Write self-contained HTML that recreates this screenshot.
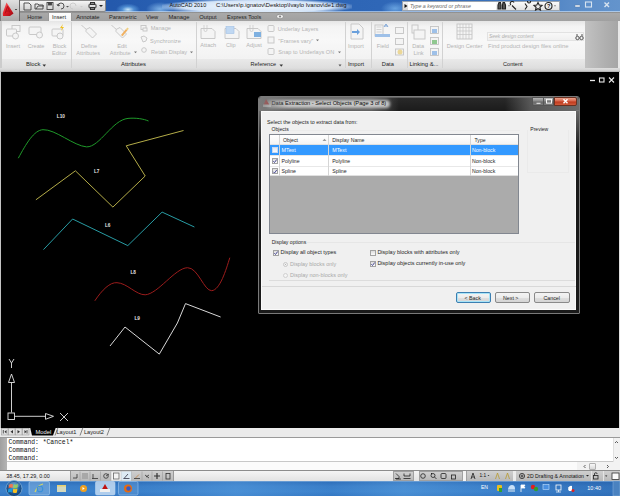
<!DOCTYPE html>
<html><head><meta charset="utf-8">
<style>
*{margin:0;padding:0;box-sizing:border-box}
html,body{width:620px;height:496px;overflow:hidden;background:#000;font-family:"Liberation Sans",sans-serif}
.a{position:absolute}
.t{position:absolute;white-space:nowrap;line-height:1}
.rl{color:#b4b4b4;font-size:5.6px}
.pt{color:#222;font-size:5.8px}
.dt{color:#1e1e1e;font-size:5.4px}
.cb{position:absolute;width:6px;height:6px;border:1px solid #a2a2a2;background:linear-gradient(#dcdcdc,#fafafa)}
.btn{position:absolute;top:292.4px;height:10.3px;border:1px solid #8a8a8a;border-radius:2px;background:linear-gradient(#f4f4f4 0%,#ececec 50%,#e0e0e0 51%,#d4d4d4 100%)}
.sb{position:absolute;top:472px;width:10px;height:8px;border:1px solid #a8a8a8;background:linear-gradient(#f0f0f0,#cfcfcf)}
</style></head><body>
<!-- ===== TITLE BAR ===== -->
<div class="a" style="left:0;top:0;width:620px;height:12px;background:linear-gradient(90deg,#2a62b4 0%,#2459ac 18%,#2a62b4 30%,#2c64b4 50%,#3068b8 65%,#3a72bc 80%,#5a8cc8 92%,#6494cc 100%)"></div>
<div class="a" style="left:106px;top:0;width:40px;height:12px;background:radial-gradient(ellipse 12px 6px at 55% 80%,rgba(210,240,255,.95),rgba(120,190,245,.5) 50%,rgba(60,130,220,0) 100%)"></div>
<div class="a" style="left:140px;top:0;width:40px;height:12px;background:radial-gradient(ellipse 14px 7px at 50% 75%,rgba(160,210,250,.7),rgba(60,130,220,0) 100%)"></div>
<div class="a" style="left:162px;top:0;width:190px;height:12px;background:radial-gradient(ellipse 100px 8px at 50% 55%,rgba(245,250,255,.98) 0%,rgba(230,242,255,.9) 75%,rgba(160,200,240,0) 100%)"></div>
<div class="a" style="left:380px;top:0;width:30px;height:12px;background:radial-gradient(ellipse 14px 7px at 50% 70%,rgba(140,200,250,.6),rgba(60,130,220,0) 100%)"></div>
<div class="a" style="left:20px;top:11px;width:600px;height:1px;background:rgba(220,235,250,.6)"></div>
<div class="t" style="left:169.5px;top:3px;font-size:5.5px;color:#101010">AutoCAD 2010</div>
<div class="t" style="left:216px;top:3px;font-size:5.85px;color:#101010">C:\Users\p.ignatov\Desktop\Ivaylo Ivanov\de1.dwg</div>
<!-- app button -->
<div class="a" style="left:0;top:0;width:20px;height:21px;background:linear-gradient(#e0e0e0,#c4c4c4 50%,#a8a8a8);border-right:1px solid #6a6a6a;border-left:1px solid #7a7a7a"></div>
<svg class="a" style="left:0;top:0" width="20" height="21" viewBox="0 0 20 21">
<defs><linearGradient id="rg" x1="0" y1="0" x2="1" y2="1"><stop offset="0" stop-color="#ff7070"/><stop offset=".5" stop-color="#e01a24"/><stop offset="1" stop-color="#9a0c14"/></linearGradient></defs>
<polygon points="6.5,2.5 13.5,13.5 10,16 3,16 2.8,13" fill="url(#rg)"/>
<path d="M5,13.5 l2.5,-7 l2.5,6 M6,11 h3" stroke="#b01018" stroke-width="1" fill="none"/>
<path d="M14.8,9 h2.4 l-1.2,1.3 z" fill="#222"/>
</svg>
<!-- QAT -->
<div class="a" style="left:20px;top:0;width:86px;height:11.5px;background:linear-gradient(#f6f6f6,#dedede 55%,#cfcfcf);border:1px solid #8a8a8a;border-left:none;border-radius:0 0 2px 0"></div>
<svg class="a" style="left:20px;top:0" width="86" height="12" viewBox="0 0 86 12">
<g fill="none" stroke="#444" stroke-width="0.9">
<path d="M4,3 h5 l2,2 v5 h-7 z"/>
<path d="M15,4 h3 l1,1 h4 v4 h-8 z M16,9 l2,-3 h6"/>
<rect x="27" y="2.5" width="6" height="7"/><rect x="28.5" y="2.5" width="3" height="2.5" fill="#444"/>
<path d="M38,6 a3,3 0 1,1 3,3" /><path d="M37,4 l1,2 l2,-1"/>
</g>
<path d="M46,6 l1.5,1.5 l1.5,-1.5 z" fill="#555"/>
<g fill="none" stroke="#c8c8c8" stroke-width="0.9"><path d="M56,6 a3,3 0 1,0 -3,3"/></g>
<path d="M60,6 l1.5,1.5 l1.5,-1.5 z" fill="#ccc"/>
<g fill="none" stroke="#333" stroke-width="1"><rect x="69" y="4" width="7" height="4" rx="1"/><rect x="70.5" y="2.5" width="4" height="2"/><rect x="70.5" y="7.5" width="4" height="2"/></g>
<path d="M79,5 l2,2 l2,-2 z" fill="#222"/>
</svg>
<!-- search strip -->
<div class="a" style="left:402px;top:1px;width:158px;height:10px;background:linear-gradient(#fbfbfb,#e2e2e2);border:1px solid #9aa4b0"></div>
<div class="a" style="left:403px;top:2px;width:5px;height:8px;background:linear-gradient(#f4f4f4,#d4d4d4)"></div>
<svg class="a" style="left:403px;top:2px" width="6" height="8"><path d="M1.5,2 l3,2 l-3,2 z" fill="#111"/></svg>
<div class="a" style="left:408px;top:2px;width:88px;height:8px;background:#fff"></div>
<div class="t" style="left:410px;top:4.2px;font-size:5.3px;font-style:italic;color:#6a6a6a">Type a keyword or phrase</div>
<svg class="a" style="left:496px;top:1px" width="64" height="10" viewBox="0 0 64 10">
<g fill="none" stroke="#222" stroke-width="1.1">
<path d="M2,8 v-4 l1,-2.5 h1.5 l0.5,2.5 v4 z M6.5,8 v-4 l0.5,-2.5 h1.5 l1,2.5 v4 z" fill="#555"/>
<path d="M20,8.5 l-4,-4 M15,4 a2,2 0 1,1 3,-2.5"/>
<path d="M29,2.5 l2,3 l-2,3 M33,2 a1.5,1.5 0 1,1 0.1,0"/>
<path d="M42,1.5 l1.2,2.6 2.8,.3 -2.1,1.9 .6,2.8 -2.5,-1.4 -2.5,1.4 .6,-2.8 -2.1,-1.9 2.8,-.3 z"/>
<circle cx="52.5" cy="5" r="3.5"/>
</g>
<path d="M12,4.5 l1,1 l1,-1 z M58,4.5 l1,1 l1,-1 z" fill="#333"/>
<text x="51" y="7.2" font-size="5.5" font-family="Liberation Sans" font-weight="bold" fill="#222">?</text>
</svg>
<!-- window buttons -->
<svg class="a" style="left:560px;top:0" width="60" height="12" viewBox="0 0 60 12">
<rect x="15" y="5" width="5" height="2" fill="#e8eef6" stroke="#5a7aa0" stroke-width="0.4"/>
<rect x="25.5" y="2" width="6" height="5" fill="none" stroke="#d8e4f0" stroke-width="1.1"/>
<path d="M44.5,2.5 l4.5,4.5 M49,2.5 l-4.5,4.5" stroke="#d8e4f0" stroke-width="1.4"/>
</svg>
<!-- ===== TAB ROW ===== -->
<div class="a" style="left:20px;top:11.5px;width:600px;height:9.5px;background:linear-gradient(#aaaaaa,#a0a0a0)"></div>
<div class="a" style="left:20px;top:11.5px;width:600px;height:1px;background:#7a7a7a;opacity:.5"></div>
<div class="a" style="left:47.5px;top:11.5px;width:24px;height:10px;background:linear-gradient(#fdfdfd,#f4f4f4);border:1px solid #9a9a9a;border-bottom:none"></div>
<div class="t pt" style="left:27.3px;top:15.2px;font-size:5.6px">Home</div>
<div class="t pt" style="left:52px;top:15.2px;font-size:5.6px">Insert</div>
<div class="t pt" style="left:76.2px;top:15.2px;font-size:5.85px">Annotate</div>
<div class="t pt" style="left:109px;top:15.2px;font-size:5.7px">Parametric</div>
<div class="t pt" style="left:146px;top:15.2px;font-size:5.7px">View</div>
<div class="t pt" style="left:168.5px;top:15.2px;font-size:5.8px">Manage</div>
<div class="t pt" style="left:199.3px;top:15.2px;font-size:5.8px">Output</div>
<div class="t pt" style="left:227px;top:15.2px;font-size:5.5px">Express Tools</div>
<svg class="a" style="left:275px;top:12.5px" width="10" height="7"><ellipse cx="5" cy="3.5" rx="3.5" ry="2.3" fill="#e8e8e8" stroke="#777" stroke-width="0.6"/><circle cx="5" cy="3.5" r="1" fill="#777"/></svg>
<!-- ===== RIBBON ===== -->
<div class="a" style="left:0;top:21px;width:620px;height:51px;background:#d6d6d6"></div>
<div class="a" style="left:0;top:21px;width:1.5px;height:51px;background:#cccccc"></div>
<div class="a" style="left:1.5px;top:21px;width:583.5px;height:38px;background:linear-gradient(#e6e6e6 0%,#f4f4f4 15%,#f8f8f8 50%,#f2f2f2 100%)"></div>
<div class="a" style="left:1.5px;top:59px;width:583.5px;height:9.3px;background:linear-gradient(#e9e9e9,#dedede)"></div>
<div class="a" style="left:585px;top:21px;width:33px;height:47.3px;background:linear-gradient(90deg,#c2c2c2,#b0b0b0 60%,#a6a6a6)"></div>
<div class="a" style="left:618px;top:21px;width:2px;height:51px;background:#e8e8e8"></div>
<div class="a" style="left:0;top:68.3px;width:620px;height:4px;background:linear-gradient(#dedede,#d2d2d2 60%,#a8a8a8)"></div>
<!-- panel separators -->
<div class="a" style="left:71px;top:22px;width:1px;height:46px;background:#d2d2d2"></div>
<div class="a" style="left:195.5px;top:22px;width:1px;height:46px;background:#d2d2d2"></div>
<div class="a" style="left:344.5px;top:22px;width:1px;height:46px;background:#d2d2d2"></div>
<div class="a" style="left:370.5px;top:22px;width:1px;height:46px;background:#d2d2d2"></div>
<div class="a" style="left:406.5px;top:22px;width:1px;height:46px;background:#d2d2d2"></div>
<div class="a" style="left:441.5px;top:22px;width:1px;height:46px;background:#d2d2d2"></div>
<!-- panel titles -->
<div class="t pt" style="left:26px;top:62.2px;font-size:5.9px">Block</div>
<svg class="a" style="left:42px;top:64px" width="5" height="4"><path d="M0.5,0.5 h3.5 l-1.75,2.2 z" fill="#333"/></svg>
<div class="t pt" style="left:121px;top:62.2px;font-size:5.9px">Attributes</div>
<div class="t pt" style="left:250.6px;top:62.2px;font-size:5.5px">Reference</div>
<svg class="a" style="left:279px;top:64px" width="5" height="4"><path d="M0.5,0.5 h3.5 l-1.75,2.2 z" fill="#333"/></svg>
<svg class="a" style="left:338px;top:64px" width="5" height="4"><path d="M0.5,0.5 h3 l-1.5,2 z" fill="#555"/></svg>
<div class="t pt" style="left:348px;top:62.2px;font-size:5.7px">Import</div>
<div class="t pt" style="left:381.8px;top:62.2px;font-size:5.7px">Data</div>
<div class="t pt" style="left:409.5px;top:62.2px;font-size:5.86px">Linking &amp;...</div>
<div class="t pt" style="left:503px;top:62.2px;font-size:5.6px">Content</div>
<!-- ribbon labels -->
<div class="t rl" style="left:6px;top:43.7px">Insert</div>
<div class="t rl" style="left:27.7px;top:43.7px">Create</div>
<div class="t rl" style="left:52.7px;top:43.7px">Block</div>
<div class="t rl" style="left:52px;top:50.8px">Editor</div>
<div class="t rl" style="left:80.9px;top:43.7px">Define</div>
<div class="t rl" style="left:76.3px;top:50.8px">Attributes</div>
<div class="t rl" style="left:117.2px;top:43.7px">Edit</div>
<div class="t rl" style="left:109.8px;top:50.8px">Attribute</div>
<svg class="a" style="left:134px;top:51px" width="4" height="3"><path d="M0,0.5 h3 l-1.5,1.8 z" fill="#777"/></svg>
<div class="t rl" style="left:150.7px;top:26.3px">Manage</div>
<div class="t rl" style="left:150px;top:38.5px">Synchronize</div>
<div class="t rl" style="left:151px;top:49.8px">Retain Display</div>
<svg class="a" style="left:190px;top:50.5px" width="4" height="3"><path d="M0,0.5 h3 l-1.5,1.8 z" fill="#777"/></svg>
<div class="t rl" style="left:200.3px;top:43.0px">Attach</div>
<div class="t rl" style="left:226px;top:43.0px">Clip</div>
<div class="t rl" style="left:246.3px;top:43.0px">Adjust</div>
<div class="t rl" style="left:277.7px;top:27.1px">Underlay Layers</div>
<div class="t rl" style="left:278.3px;top:38.5px">"Frames vary"</div>
<svg class="a" style="left:316px;top:39px" width="4" height="3"><path d="M0,0.5 h3 l-1.5,1.8 z" fill="#777"/></svg>
<div class="t rl" style="left:278.3px;top:49.8px">Snap to Underlays ON</div>
<svg class="a" style="left:338px;top:50.5px" width="4" height="3"><path d="M0,0.5 h3 l-1.5,1.8 z" fill="#777"/></svg>
<div class="t rl" style="left:347.9px;top:43.7px">Import</div>
<div class="t rl" style="left:376.8px;top:43.7px">Field</div>
<div class="t rl" style="left:412.2px;top:43.7px">Data</div>
<div class="t rl" style="left:413.4px;top:50.8px">Link</div>
<div class="t rl" style="left:446.8px;top:43.7px">Design Center</div>
<!-- content search -->
<div class="a" style="left:486.5px;top:32px;width:97px;height:9px;background:linear-gradient(#f8f8f8,#f0f0f0);border:1px solid #e2e2e2"></div>
<div class="t" style="left:489px;top:35.2px;font-size:4.95px;font-style:italic;color:#b0b0b0">Seek design content</div>
<svg class="a" style="left:575px;top:33px" width="9" height="8"><g fill="none" stroke="#555" stroke-width="1"><circle cx="2.5" cy="5" r="1.7"/><circle cx="6.5" cy="5" r="1.7"/><path d="M2,3 v-2 M7,3 v-2"/></g></svg>
<div class="t" style="left:488.1px;top:43.5px;font-size:5.83px;color:#b4b4b4">Find product design files online</div>
<svg class="a" style="left:0;top:0" width="620" height="72" viewBox="0 0 620 72">
<g fill="#f4f4f4" stroke="#c4c4c4" stroke-width="0.9">
<!-- Insert -->
<rect x="12" y="25.5" width="8" height="6"/><rect x="6.5" y="29" width="10" height="7" rx="1"/><circle cx="15.5" cy="36" r="3"/>
<!-- Create -->
<rect x="29" y="27" width="12" height="7.5" rx="1"/><circle cx="39.5" cy="35" r="3"/>
<!-- Block editor -->
<rect x="52" y="29" width="11" height="7" rx="1"/><circle cx="60" cy="36" r="3"/>
<!-- define attr tag -->
<path d="M86,29.5 l4,-2 l6.5,6.5 l-4,4 l-6.5,-6.5 z"/><path d="M86,29 q-3,-2 -4.5,-4" fill="none"/>
<!-- edit attr -->
<path d="M116,29.5 l4,-2 l6.5,6.5 l-4,4 l-6.5,-6.5 z"/><path d="M116,29 q-3,-2 -4.5,-4" fill="none"/>
<!-- small attr icons -->
<rect x="141" y="25.5" width="5" height="4"/><rect x="143" y="28" width="4" height="3"/>
<path d="M141,37 l3,-1 l3,2 l-1,3 l-3,1 z"/>
<circle cx="144" cy="50" r="2.3"/>
<!-- Attach -->
<path d="M201,28.5 h11 l3,3 v7 h-14 z"/>
<!-- Clip -->
<path d="M225,28.5 h11 l3,3 v7 h-14 z"/>
<!-- Adjust -->
<path d="M247,28.5 h11 l3,3 v7 h-14 z"/>
<!-- underlay small -->
<rect x="268" y="25.5" width="6" height="6" rx="1"/>
<rect x="268" y="37" width="6" height="6"/>
<rect x="268" y="48.5" width="6" height="6" rx="1"/>
<!-- import -->
<path d="M351,24 h8 l4,4 v11 h-12 z"/>
<!-- field -->
<rect x="375" y="25" width="8" height="11"/>
<rect x="395.5" y="27.5" width="8" height="6"/><rect x="395.5" y="38.5" width="8" height="6"/><rect x="395.5" y="49" width="8" height="6"/>
<!-- data link -->
<rect x="412" y="25" width="6" height="8"/><rect x="414" y="30" width="11" height="9"/>
<rect x="430.5" y="26.5" width="8" height="7"/><rect x="430.5" y="37.5" width="8" height="7"/><rect x="430.5" y="48.5" width="8" height="7"/>
<!-- design center -->
<rect x="457" y="24" width="15" height="15"/>
</g>
<g fill="none" stroke="#c4c4c4" stroke-width="0.7">
<path d="M460,24 v15 M463,24 v15 M466,24 v15 M469,24 v15 M457,27.5 h15 M457,31 h15 M457,34.5 h15"/>
<path d="M204,25 v5 a1.5,1.5 0 0,0 3,0 v-5"/><path d="M250,25 v5 a1.5,1.5 0 0,0 3,0 v-5"/>
<path d="M376.5,27 h5 M376.5,29.5 h5 M376.5,32 h5"/>
</g>
<path d="M60,28 l3,-4 l-1,3 h2 l-3,4 l1,-3 z" fill="#f0c020"/>
<path d="M121,35 l5,-6 l1.5,1.3 l-5,6 z" fill="#f0b060"/><path d="M126,29 l1.5,-1.5 l1.3,1.3 l-1.3,1.5 z" fill="#f0d080"/>
<rect x="226" y="26.5" width="8" height="7" fill="#c0d8f2" stroke="#a0c0e4" stroke-width="0.6"/>
<rect x="254" y="32" width="7" height="5" fill="#7eb0e0"/>
<path d="M352,31 h5 v-2 l3,3 l-3,3 v-2 h-5 z" fill="#6aa0dc"/>
<path d="M384,27 l2,-3 l2,3 M384.5,26 h3" fill="none" stroke="#6a98d0" stroke-width="0.8"/>
<rect x="375" y="34" width="15" height="3" fill="#9ec0e8"/>
<circle cx="400" cy="52" r="2.5" fill="#e8d080" opacity=".8"/>
<rect x="432" y="29" width="5" height="4" fill="#9ec0e8"/><rect x="432" y="40" width="5" height="4" fill="#90c890"/><rect x="432" y="51" width="5" height="4" fill="#9ec0e8"/>
</svg>
<!-- ===== CANVAS ===== -->
<div class="a" style="left:0;top:72px;width:1.4px;height:356px;background:#c4c4c4"></div>
<div class="a" style="left:619px;top:72px;width:1px;height:356px;background:#e0e0e0"></div>
<svg class="a" style="left:0;top:0" width="620" height="430" viewBox="0 0 620 430">
<g fill="none" stroke-width="1" stroke-linejoin="miter">
<path d="M18.3,158.2 C26,144 34,130 43,129.7 C55,129 74,146 86.6,146.9 C100,147 112,120 128,118.4 C136,117.6 144,119 148.5,121" stroke="#1f9a2a"/>
<path d="M35.9,199.8 L75.4,170.8 L112.9,207.1 L145.2,176 L126.2,145.8 L183.5,130.5" stroke="#b4ac48"/>
<path d="M43.5,249.6 L72.6,219 L127.8,245.6 L162.1,212.1 L194.4,227" stroke="#289ca4"/>
<path d="M94.8,300.8 C102,290 110,282 117,282.7 C127,283 136,295 145.2,294.8 C158,294 175,268 187.5,267.7 C198,267.5 204,291 211.7,290.7 C220,290 226,270 229.8,257.7" stroke="#9c1c1c"/>
<path d="M110,346 L125,327 L159.3,354.1 L177.4,323 L185.5,303.6 L220.6,317" stroke="#d8d8d8"/>
</g>
<g font-family="Liberation Sans" font-size="4.7px" font-weight="bold" fill="#e4e4e4">
<text x="56.8" y="118">L10</text>
<text x="94" y="173">L7</text>
<text x="105" y="226.5">L6</text>
<text x="130.5" y="274">L8</text>
<text x="134.5" y="320">L9</text>
</g>
<!-- UCS -->
<g fill="none" stroke="#e4e4e4" stroke-width="0.9">
<path d="M9,359 l2.5,4 l2.5,-4 M11.5,363 v5"/>
<path d="M11.5,374 l-3,8.5 h6 z"/>
<path d="M11.5,382.5 v30"/>
<rect x="8" y="413" width="6.5" height="6.5"/>
<path d="M14.5,416.3 h31"/>
<path d="M45.5,413.5 l8,2.8 l-8,3 z"/>
<path d="M60,413 l8,8 M68,413 l-8,8"/>
</g>
<!-- drawing window controls -->
<g stroke="#e8e8e8" fill="none">
<path d="M590,80.5 h5" stroke-width="1.3"/>
<rect x="599.5" y="78" width="4.5" height="4" stroke-width="1.1"/>
<path d="M609,77.5 l5,5 M614,77.5 l-5,5" stroke-width="1.1"/>
</g>
</svg>
<!-- ===== LAYOUT TABS ===== -->
<div class="a" style="left:0;top:427.8px;width:620px;height:9px;background:#ebebeb"></div>
<div class="a" style="left:0;top:436.5px;width:620px;height:1.5px;background:#9a9a9a"></div>
<svg class="a" style="left:0;top:427px" width="120" height="10" viewBox="0 0 120 10">
<g fill="#e0e0e0" stroke="#9a9a9a" stroke-width="0.6"><rect x="1.5" y="1.5" width="6.5" height="6.5"/><rect x="8.5" y="1.5" width="6.5" height="6.5"/><rect x="15.5" y="1.5" width="6.5" height="6.5"/><rect x="22.5" y="1.5" width="6.5" height="6.5"/></g>
<g fill="#333"><path d="M3.5,3 v3.5 M6.5,3 l-2,1.75 l2,1.75 z"/><path d="M13,3 l-2.5,1.75 l2.5,1.75 z"/><path d="M17.5,3 l2.5,1.75 l-2.5,1.75 z"/><path d="M24.5,3 l2,1.75 l-2,1.75 z"/></g>
<path d="M3.3,3 v3.5 M27,3 v3.5" stroke="#333" stroke-width="0.8"/>
<path d="M30,0 h26 l-3,8.5 h-21 z" fill="#000"/>
<path d="M55,8.5 l3,-8 M80,8.5 l3,-8 M107,8.5 l3,-8" stroke="#555" stroke-width="0.7"/>
</svg>
<div class="t" style="left:35.5px;top:429.5px;font-size:5.8px;color:#f0f0f0">Model</div>
<div class="t" style="left:56.5px;top:429.5px;font-size:5.6px;color:#1a1a1a">Layout1</div>
<div class="t" style="left:84px;top:429.5px;font-size:5.6px;color:#1a1a1a">Layout2</div>
<!-- ===== COMMAND LINE ===== -->
<div class="a" style="left:0;top:438px;width:620px;height:32.5px;background:#fff"></div>
<div class="a" style="left:0;top:438px;width:7.3px;height:32.5px;background:linear-gradient(90deg,#a0a0a0,#b4b4b4)"></div>
<div class="a" style="left:7px;top:461.2px;width:606px;height:1px;background:#c8c8c8"></div>
<div class="a" style="left:7px;top:462.2px;width:606px;height:8.3px;background:#fbfbfb"></div>
<div class="a" style="left:613px;top:438px;width:7px;height:24px;background:#f2f2f2;border-left:1px solid #e0e0e0"></div>
<svg class="a" style="left:613px;top:438px" width="7" height="33"><path d="M2,5 l1.5,-1.5 l1.5,1.5" stroke="#333" fill="none" stroke-width="0.8"/><path d="M2,19 l1.5,1.5 l1.5,-1.5" stroke="#333" fill="none" stroke-width="0.8"/></svg>
<div class="a" style="left:577px;top:462.2px;width:43px;height:8.3px;background:#f2f2f2"></div>
<div class="a" style="left:589px;top:462.5px;width:7px;height:7.5px;background:linear-gradient(#f8f8f8,#d8d8d8);border:1px solid #b0b0b0;border-radius:1px"></div>
<svg class="a" style="left:580px;top:462px" width="40" height="9"><path d="M5.5,3 l-1.5,1.5 l1.5,1.5 M27,3 l1.5,1.5 l-1.5,1.5" stroke="#333" fill="none" stroke-width="0.8"/></svg>
<div class="a" style="left:0;top:470.3px;width:620px;height:1px;background:#8c8c8c"></div>
<div class="t" style="left:8.4px;top:440.4px;font-family:'Liberation Mono',monospace;font-size:6.37px;color:#111">Command: *Cancel*</div>
<div class="t" style="left:8.4px;top:448.4px;font-family:'Liberation Mono',monospace;font-size:6.37px;color:#111">Command:</div>
<div class="t" style="left:8.4px;top:456.4px;font-family:'Liberation Mono',monospace;font-size:6.37px;color:#111">Command:</div>
<!-- ===== STATUS BAR ===== -->
<div class="a" style="left:0;top:471.3px;width:620px;height:9.5px;background:linear-gradient(#f4f4f4,#ebebeb 50%,#e2e2e2)"></div>
<div class="t" style="left:6.3px;top:474px;font-size:5.4px;color:#111">38.45, 17.29, 0.00</div>
<!-- status buttons -->
<div class="a" style="left:69.7px;top:471.3px;width:104.5px;height:9.5px;background:linear-gradient(#cfcfcf,#b9b9b9);border-left:1px solid #999;border-right:1px solid #999"></div>
<svg class="a" style="left:69px;top:471px" width="106" height="10" viewBox="0 0 106 10">
<g stroke="#9a9a9a" stroke-width="0.6"><path d="M11,0.5 v9 M21,0.5 v9 M31.5,0.5 v9 M42,0.5 v9 M52,0.5 v9 M62.5,0.5 v9 M73,0.5 v9 M83,0.5 v9 M93.5,0.5 v9"/></g>
<rect x="42.3" y="0.6" width="9.5" height="9" fill="#f4f4f4"/>
<rect x="52.3" y="0.6" width="10" height="9" fill="#dceaf4"/>
<g fill="none" stroke="#333" stroke-width="0.8">
<path d="M4,7 h4 v-4"/>
<rect x="13" y="2" width="6" height="6" fill="#a8a8a8" stroke="none"/>
<path d="M23,7.5 h6 M24,3 v4.5"/>
<circle cx="37" cy="5" r="2.3"/><path d="M37,5 l3,-2"/>
<rect x="44.5" y="2" width="5.5" height="6" stroke="#666"/>
<path d="M54.5,7.5 h6 M55,7.5 l4,-4.5" stroke="#334"/>
<path d="M66,7.5 l4,-4" stroke="#c08040"/><path d="M65,7.5 h6"/>
<path d="M76,4 l4,3 M77,6 l3,-2"/>
<path d="M88,2 v6 M85,5 h6" stroke-width="1.2"/>
<rect x="97" y="2.5" width="4" height="5.5"/>
</g>
</svg>
<div class="a" style="left:392.5px;top:471.3px;width:21px;height:9.5px;background:linear-gradient(#cfcfcf,#b9b9b9);border:1px solid #a0a0a0"></div>
<div class="a" style="left:419px;top:471.3px;width:44px;height:9.5px;background:linear-gradient(#cfcfcf,#b9b9b9);border:1px solid #a0a0a0"></div>
<div class="a" style="left:462.5px;top:471.3px;width:3.5px;height:9.5px;background:#f4f4f4"></div>
<div class="a" style="left:466px;top:471.3px;width:154px;height:9.5px;background:linear-gradient(#cfcfcf,#b9b9b9);border-left:1px solid #a0a0a0"></div>
<div class="a" style="left:513px;top:471.3px;width:2.5px;height:9.5px;background:#ececec"></div>
<div class="a" style="left:591px;top:471.3px;width:1.2px;height:9.5px;background:#e4e4e4"></div>
<div class="a" style="left:602.5px;top:471.3px;width:1.2px;height:9.5px;background:#e4e4e4"></div>
<svg class="a" style="left:390px;top:471px" width="230" height="10" viewBox="0 0 230 10">
<g fill="none" stroke="#222" stroke-width="0.8">
<path d="M6,2.5 l3,3 v2 h-4 M6,8 h5"/>
<path d="M14,2.5 v2.5 h6 v-2.5 M13.5,7.5 h7"/>
<circle cx="33" cy="5" r="2.3"/>
<circle cx="43" cy="4.5" r="2"/><path d="M44.5,6 l2,2"/>
<rect x="51" y="2.5" width="5" height="5" rx="1"/>
<rect x="61.5" y="4" width="4" height="4"/>
<path d="M81,8 l2,-6 l2,6 M81.5,6 h3"/>
<path d="M105.5,8 l2,-6 l2,6" stroke="#b89a30"/><path d="M115.5,8 l2,-6 l2,6" stroke="#b89a30"/>
<circle cx="132" cy="5" r="2.6"/><circle cx="132" cy="5" r="1"/>
<rect x="203.5" y="4.5" width="4.5" height="3.5"/><path d="M204.5,4.5 v-1.5 a1.3,1.3 0 0,1 2.6,0"/>
<rect x="222" y="2" width="7" height="6.5" fill="#fafafa" stroke="#333"/>
</g>
<path d="M41,2 l1,1" stroke="#222"/>
<path d="M97.5,4 l1,1 l1,-1 z M196,4 l1.5,1.5 l1.5,-1.5 z M215,4.5 l1.2,1.2 l1.2,-1.2 z" fill="#222"/>
</svg>
<div class="t" style="left:479.4px;top:473.5px;font-size:4.8px;color:#111">1:1</div>
<div class="t" style="left:527px;top:473.5px;font-size:5.18px;color:#111">2D Drafting &amp; Annotation</div>
<!-- ===== TASKBAR ===== -->
<div class="a" style="left:0;top:480.8px;width:620px;height:15.2px;background:linear-gradient(#2c6cb8 0%,#3a7ec8 35%,#3c82cc 70%,#3478c4 100%)"></div>
<div class="a" style="left:140px;top:480.8px;width:480px;height:15.2px;background:linear-gradient(90deg,rgba(90,160,225,0) 0%,rgba(90,160,225,.45) 20%,rgba(90,160,225,0) 40%,rgba(100,170,230,.35) 55%,rgba(90,160,225,0) 75%,rgba(30,80,150,.3) 100%)"></div>
<div class="a" style="left:0;top:480.8px;width:620px;height:1px;background:#7aa8d8;opacity:.7"></div>
<svg class="a" style="left:0;top:479px" width="620" height="17" viewBox="0 0 620 17">
<defs><radialGradient id="orb" cx="50%" cy="40%" r="60%"><stop offset="0" stop-color="#5aa8d8"/><stop offset=".6" stop-color="#1e5a98"/><stop offset="1" stop-color="#123e70"/></radialGradient></defs>
<circle cx="14" cy="9.5" r="8" fill="url(#orb)" stroke="#8ab8e0" stroke-width="0.7"/>
<path d="M9,6 q2,-1.5 4,-.5 l-.5,3.5 q-2,-1 -4,.5 z" fill="#f05a28"/>
<path d="M13.8,5.3 q2,1 4.2,-.3 l-.5,3.8 q-2,1.2 -4.2,.2 z" fill="#7cc242"/>
<path d="M8.3,10.3 q2,-1.5 4,-.5 l-.5,3.6 q-2,-1 -4,.4 z" fill="#1a9be0"/>
<path d="M13.2,9.8 q2,1 4.2,-.2 l-.5,3.8 q-2,1.2 -4.2,.2 z" fill="#f8c020"/>
<ellipse cx="14" cy="6" rx="6" ry="3" fill="#fff" fill-opacity=".18"/>
<rect x="29" y="2.5" width="20.5" height="13.5" rx="1.5" fill="#8ab8e4" fill-opacity=".5" stroke="#a8cef0" stroke-width="0.6"/>
<path d="M35,13 q3,-7 8,-8" stroke="#d8d860" stroke-width="1.2" fill="none"/><circle cx="40" cy="10" r="2.8" fill="none" stroke="#3a90d8" stroke-width="1.1"/>
<rect x="57" y="6" width="9" height="7" fill="#e8d070"/><rect x="57" y="7.5" width="9" height="5.5" fill="#c8e0f0" fill-opacity=".6"/>
<circle cx="83.5" cy="9.5" r="3.5" fill="#f0a020"/><path d="M82.5,8 l2.2,1.5 l-2.2,1.5 z" fill="#fff"/>
<rect x="95.5" y="2.5" width="19.5" height="13.5" rx="1.5" fill="#d8e8f8" fill-opacity=".75" stroke="#b8d4f0" stroke-width="0.6"/>
<path d="M101,12 l4,-7 l4,7 z" fill="#c01010"/><rect x="100" y="10" width="10" height="3" fill="#f0f0f0"/>
<rect x="118.5" y="2.5" width="19.5" height="13.5" rx="1.5" fill="#6a9ed4" fill-opacity=".4" stroke="#9cc4ec" stroke-width="0.6"/>
<circle cx="128" cy="9.5" r="4" fill="#e86a10"/><circle cx="128.5" cy="9.5" r="2.2" fill="#3a5ac0"/>
<rect x="497" y="6" width="5" height="6" rx="1" fill="#e8c020"/><rect x="499" y="9" width="3" height="4" fill="#30a030"/>
<path d="M508,10 q1,-4 4,-4 q3,0 3,4 z" fill="#c8e0f8"/><rect x="508" y="10" width="7" height="3" fill="#90b8e0"/>
<path d="M521,6 v7 M521,6 h4 l-1,1.5 l1,1.5 h-4" stroke="#fff" stroke-width="0.8" fill="#fff"/>
<circle cx="533" cy="8" r="2.2" fill="#e02020"/><circle cx="536" cy="10" r="2.2" fill="#30a030"/>
<rect x="543" y="5.5" width="6" height="5" fill="#4a90e0" stroke="#c0e0ff" stroke-width="0.6"/>
<rect x="556" y="6" width="5" height="5" fill="none" stroke="#fff" stroke-width="0.8"/><path d="M558.5,11 v2 M556,13 h5" stroke="#fff" stroke-width="0.7"/>
<path d="M569,12 a3,3 0 0,1 3,-5 v5 z" fill="#fff"/><circle cx="573" cy="11.5" r="1.5" fill="#e02020"/>
<rect x="613" y="2" width="7" height="15" fill="#4a82c0" stroke="#8ab4e0" stroke-width="0.5"/>
</svg>
<div class="t" style="left:481px;top:485.3px;font-size:5.04px;color:#fff">EN</div>
<div class="t" style="left:587.3px;top:486.4px;font-size:5.47px;color:#fff">10:40</div>
<!-- ===== DIALOG ===== -->
<div class="a" style="left:258px;top:96px;width:322px;height:217.5px;background:linear-gradient(#2a2a2a,#181818 8%,#1a1a1a);border:1px solid #7a7a7a;border-radius:3px 3px 1px 1px"></div>
<div class="a" style="left:259px;top:97px;width:320px;height:1px;background:#5a5a5a"></div>
<div class="a" style="left:259px;top:97px;width:140px;height:13.5px;border-radius:3px 0 0 0;background:linear-gradient(90deg,rgba(110,110,110,.9) 0%,rgba(110,110,110,.8) 80%,rgba(80,80,80,0) 100%)"></div>
<div class="a" style="left:266px;top:99.5px;width:124px;height:8px;border-radius:4px;background:rgba(205,205,205,.95);filter:blur(1.6px)"></div>
<svg class="a" style="left:262px;top:98px" width="10" height="10" viewBox="0 0 10 10"><polygon points="4,1 8,8 1,8" fill="#c81818"/><rect x="1" y="6.5" width="8" height="2.5" fill="#f0f0f0"/></svg>
<div class="t" style="left:271.5px;top:100.6px;font-size:5.68px;color:#0a0a0a">Data Extraction - Select Objects (Page 3 of 8)</div>
<div class="a" style="left:505px;top:97px;width:74px;height:13.5px;border-radius:0 3px 0 0;background:linear-gradient(90deg,rgba(110,110,110,0) 0%,rgba(110,110,110,.7) 35%,rgba(120,120,120,.85) 100%)"></div>
<div class="a" style="left:532px;top:96.8px;width:22px;height:9px;background:linear-gradient(#b4b4b4,#8a8a8a 45%,#6a6a6a 55%,#7a7a7a);border-radius:0 0 0 2px;border:0.5px solid #555"></div>
<div class="a" style="left:543.2px;top:97px;width:0.6px;height:8.5px;background:#555"></div>
<div class="a" style="left:553.7px;top:96.8px;width:23px;height:9px;background:linear-gradient(#eaa08a,#d8644a 45%,#c03a1e 55%,#d05a3a);border-radius:0 2px 2px 0;border:0.5px solid #6a3020"></div>
<svg class="a" style="left:532px;top:96.8px" width="46" height="9" viewBox="0 0 46 9">
<path d="M4.5,6.3 h4" stroke="#e8e8e8" stroke-width="1.1"/>
<rect x="14.5" y="2.3" width="5" height="3.8" fill="none" stroke="#f8f8f8" stroke-width="1"/>
<path d="M31.5,2.3 l4,4 M35.5,2.3 l-4,4" stroke="#fff" stroke-width="1.4"/>
</svg>
<div class="a" style="left:259px;top:97px;width:30px;height:13.5px;border-radius:3px 0 0 0;background:linear-gradient(90deg,rgba(125,125,125,.9),rgba(125,125,125,0))"></div>
<div class="a" style="left:259px;top:110px;width:3px;height:40px;background:linear-gradient(rgba(120,120,120,.85),rgba(40,40,40,0))"></div>
<div class="a" style="left:575.5px;top:110px;width:3.5px;height:40px;background:linear-gradient(rgba(120,120,120,.85),rgba(40,40,40,0))"></div>
<div class="a" style="left:261.2px;top:110.5px;width:314.5px;height:199px;background:#f0f0f0;border:1px solid #fafafa"></div>
<div class="t dt" style="left:267px;top:119.5px;font-size:5.31px">Select the objects to extract data from:</div>
<div class="t dt" style="left:271.5px;top:127.2px;font-size:5.07px">Objects</div>
<div class="a" style="left:290px;top:129.8px;width:230px;height:1px;background:#ebebeb"></div>
<!-- table -->
<div class="a" style="left:268.9px;top:134.2px;width:250.6px;height:100px;background:#ababab;border:1px solid #828790"></div>
<div class="a" style="left:269.9px;top:135.2px;width:248.6px;height:9.5px;background:linear-gradient(#ffffff,#f4f4f4);border-bottom:1px solid #e0e0e0"></div>
<div class="a" style="left:269.9px;top:144.7px;width:248.6px;height:10.5px;background:#3399ff"></div>
<div class="a" style="left:269.9px;top:155.2px;width:248.6px;height:10.4px;background:#fff;border-top:1px solid #e8e8e8"></div>
<div class="a" style="left:269.9px;top:165.6px;width:248.6px;height:10.5px;background:#fff;border-top:1px solid #e8e8e8;border-bottom:1px solid #e0e0e0"></div>
<div class="a" style="left:279px;top:135.2px;width:0.8px;height:40.9px;background:#d5d5d5"></div>
<div class="a" style="left:328.2px;top:135.2px;width:0.8px;height:40.9px;background:#d5d5d5"></div>
<div class="a" style="left:470.2px;top:135.2px;width:0.8px;height:40.9px;background:#d5d5d5"></div>
<div class="t dt" style="left:283px;top:137.5px;font-size:5.19px">Object</div>
<svg class="a" style="left:322px;top:138px" width="5" height="4"><path d="M0.5,3 l2,-2.3 l2,2.3 z" fill="#9a9a9a"/></svg>
<div class="t dt" style="left:332.2px;top:137.6px;font-size:5.2px">Display Name</div>
<div class="t dt" style="left:474.5px;top:137.5px;font-size:5.1px">Type</div>
<div class="t" style="left:281.5px;top:147.7px;font-size:5.36px;color:#fff">MText</div>
<div class="t" style="left:332.2px;top:147.7px;font-size:5.36px;color:#fff">MText</div>
<div class="t" style="left:472px;top:147.7px;font-size:5.18px;color:#fff">Non-block</div>
<div class="t dt" style="left:281.5px;top:159px;font-size:5.15px">Polyline</div>
<div class="t dt" style="left:332.2px;top:159px;font-size:5.15px">Polyline</div>
<div class="t dt" style="left:472px;top:159.2px;font-size:5.18px">Non-block</div>
<div class="t dt" style="left:281.5px;top:169px;font-size:5.2px">Spline</div>
<div class="t dt" style="left:332.2px;top:169px;font-size:5.2px">Spline</div>
<div class="t dt" style="left:472px;top:169.1px;font-size:5.18px">Non-block</div>
<div class="cb" style="left:272px;top:147px;border-color:#c8d8f0;background:linear-gradient(#e0e8f4,#f8fafc)"></div>
<div class="cb" style="left:272px;top:157.5px"></div>
<div class="cb" style="left:272px;top:168px"></div>
<svg class="a" style="left:272px;top:157.5px" width="6" height="17"><path d="M1.3,3.2 l1.2,1.3 l2.2,-3" stroke="#3a3a8a" stroke-width="0.9" fill="none"/><path d="M1.3,13.7 l1.2,1.3 l2.2,-3" stroke="#3a3a8a" stroke-width="0.9" fill="none"/></svg>
<!-- preview -->
<div class="t dt" style="left:530.3px;top:127.3px;font-size:5.06px">Preview</div>
<div class="a" style="left:527px;top:130px;width:42px;height:43px;border:1px solid #eaeaea;border-top:none"></div>
<!-- display options -->
<div class="t dt" style="left:271.7px;top:240.2px;font-size:5.1px">Display options</div>
<div class="a" style="left:307px;top:242px;width:268px;height:1px;background:#e6e6e6"></div>
<div class="a" style="left:269px;top:279.5px;width:306px;height:1px;background:#dcdcdc"></div>
<div class="a" style="left:261.5px;top:286px;width:314px;height:1px;background:#d8d8d8"></div>
<div class="cb" style="left:272.6px;top:249.5px"></div>
<svg class="a" style="left:272.6px;top:249.5px" width="6" height="6"><path d="M1.3,3.2 l1.2,1.3 l2.2,-3" stroke="#3a3a8a" stroke-width="0.9" fill="none"/></svg>
<div class="t dt" style="left:280.5px;top:250px;font-size:5.49px">Display all object types</div>
<div class="a" style="left:282.8px;top:261.8px;width:5px;height:5px;border-radius:50%;border:1px solid #c8c8c8;background:radial-gradient(circle,#b8b8b8 35%,#f0f0f0 45%)"></div>
<div class="t" style="left:290px;top:262px;font-size:5.45px;color:#a8a8a8">Display blocks only</div>
<div class="a" style="left:282.8px;top:272.7px;width:5px;height:5px;border-radius:50%;border:1px solid #d0d0d0;background:#f4f4f4"></div>
<div class="t" style="left:290px;top:272.9px;font-size:5.48px;color:#a8a8a8">Display non-blocks only</div>
<div class="cb" style="left:369.5px;top:249.5px"></div>
<div class="t dt" style="left:377.4px;top:250px;font-size:5.5px">Display blocks with attributes only</div>
<div class="cb" style="left:369.5px;top:260.5px"></div>
<svg class="a" style="left:369.5px;top:260.5px" width="6" height="6"><path d="M1.3,3.2 l1.2,1.3 l2.2,-3" stroke="#3a3a8a" stroke-width="0.9" fill="none"/></svg>
<div class="t dt" style="left:377.4px;top:261px;font-size:5.52px">Display objects currently in-use only</div>
<!-- buttons -->
<div class="btn" style="left:455.8px;width:35px;border-color:#3c7fb1;box-shadow:inset 0 0 0 1px #a8e4f8"></div>
<div class="btn" style="left:494.9px;width:35.4px"></div>
<div class="btn" style="left:534.3px;width:35.3px"></div>
<div class="t dt" style="left:464.5px;top:296px;font-size:5.3px">&lt; Back</div>
<div class="t dt" style="left:503px;top:296px;font-size:5.3px">Next &gt;</div>
<div class="t dt" style="left:543.5px;top:296px;font-size:5.3px">Cancel</div>
</body></html>
